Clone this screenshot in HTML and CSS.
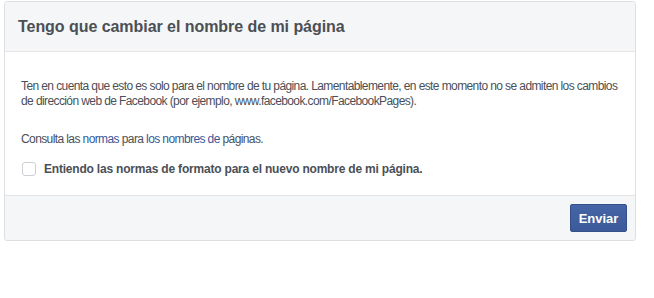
FILE: index.html
```html
<!DOCTYPE html>
<html lang="es">
<head>
    <meta charset="UTF-8">
    <title>Cambiar nombre de la página</title>
    <link rel="stylesheet" href="styles.css">
</head>
<body>
    <div class="dialog">
        <div class="dialog-header">
            <h2 class="dialog-title">Tengo que cambiar el nombre de mi página</h2>
        </div>
        <div class="dialog-body">
            <p class="note">Ten en cuenta que esto es solo para el nombre de tu página. Lamentablemente, en este momento no se admiten los cambios de dirección web de Facebook (por ejemplo, www.facebook.com/FacebookPages).</p>
            <p class="note">Consulta las <a href="#">normas</a> para <a href="#">los nombres de</a> páginas.</p>
            <label class="agree">
                <span class="checkbox"></span>
                <span class="agree-text">Entiendo las normas de formato para el nuevo nombre de mi página.</span>
            </label>
        </div>
        <div class="dialog-footer">
            <button class="send-btn">Enviar</button>
        </div>
    </div>
</body>
</html>
```

FILE: styles.css
```css
* {
    margin: 0;
    padding: 0;
    box-sizing: border-box;
}

body {
    background: #fff;
    color: #4b4f56;
    font-family: 'Liberation Sans', Arial, sans-serif;
    font-size: 12px;
    padding: 1px 18px 0 4px;
}

a {
    color: #365899;
    text-decoration: none;
}

.dialog {
    width: 632px;
    border: 1px solid #dddfe2;
    border-radius: 3px;
    background: #fff;
}

.dialog-header {
    height: 50px;
    background: #f5f6f7;
    border-bottom: 1px solid #e5e5e5;
    border-radius: 3px 3px 0 0;
    padding: 15px 13px 0;
}

.dialog-title {
    font-size: 16px;
    font-weight: bold;
    color: #4b4f56;
    line-height: 20px;
    letter-spacing: -0.05px;
}

.dialog-body {
    padding: 27px 12px 19px 16px;
}

.note {
    line-height: 15px;
    margin-bottom: 23px;
    letter-spacing: -0.6px;
}

.note + .note {
    margin-bottom: 15px;
}

.agree {
    display: flex;
    align-items: center;
    gap: 8px;
    font-weight: bold;
    padding-left: 1px;
    letter-spacing: -0.2px;
}

.checkbox {
    width: 14px;
    height: 14px;
    border: 1px solid #ccd0d5;
    border-radius: 3px;
    background: #fff;
}

.dialog-footer {
    height: 45px;
    background: #f5f6f7;
    border-top: 1px solid #e5e5e5;
    border-radius: 0 0 3px 3px;
    display: flex;
    justify-content: flex-end;
    align-items: center;
    padding: 0 8px 0 0;
}

.send-btn {
    height: 28px;
    width: 57px;
    background: linear-gradient(#4665a6, #3c5a99);
    border: 1px solid #355089;
    border-radius: 2px;
    color: #fff;
    font-family: 'Liberation Sans', Arial, sans-serif;
    font-size: 13px;
    font-weight: bold;
}
```
